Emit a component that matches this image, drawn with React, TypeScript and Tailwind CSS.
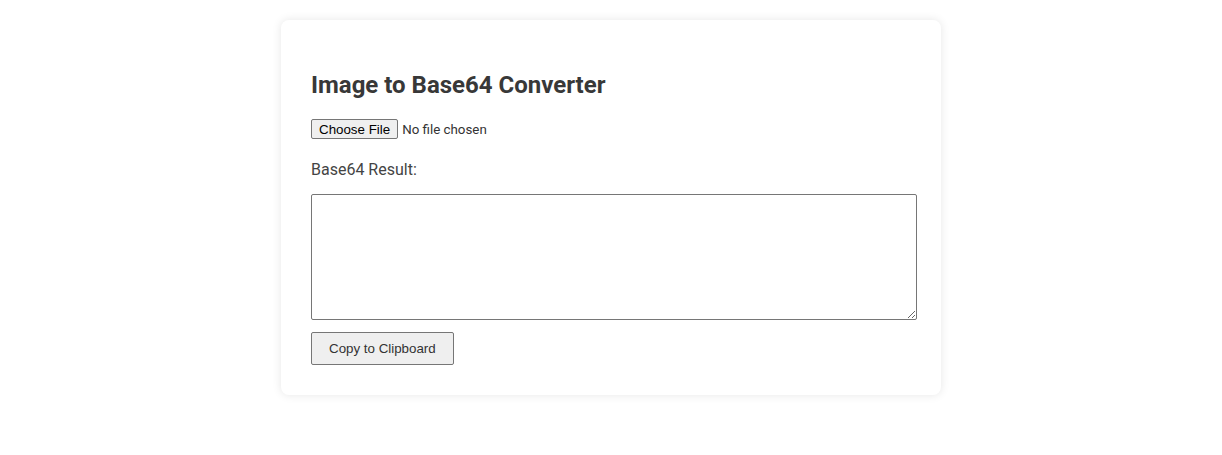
import React from "react";

export default function App() {
  return (
    <div className="min-h-[455px] bg-white pt-[20px] font-['Roboto',sans-serif] text-[#333]">
      <div className="mx-auto w-[660px] rounded-[8px] bg-white px-[30px] pt-[30px] pb-[30px] shadow-[0_0_10px_rgba(0,0,0,0.1)]">
        <h2 className="mt-[21px] mb-[20px] text-[24px] leading-[28px] font-bold text-[#383838]">
          Image to Base64 Converter
        </h2>
        <input
          type="file"
          accept="image/*"
          className="block h-[21px] text-[13.33px] text-[#333] file:mr-[4px] file:mt-0 file:h-[20px] file:rounded-[2px] file:border file:border-solid file:border-[#767676] file:bg-[#efefef] file:px-[7px] file:font-['Liberation_Sans',Arial,sans-serif] file:text-[13.33px] file:text-black"
        />
        <p className="mt-[20px] text-[16px] leading-[19px] text-[#444]">Base64 Result:</p>
        <textarea
          readOnly
          className="mt-[15px] box-content block h-[120px] w-[600px] resize rounded-[2px] border border-solid border-[#767676] p-[2px] text-[13.33px]"
        />
        <button className="mt-[12px] h-[33px] rounded-[2px] border border-solid border-[#767676] bg-[#efefef] px-[17px] font-['Liberation_Sans',Arial,sans-serif] text-[13.33px] text-[#333]">
          Copy to Clipboard
        </button>
      </div>
    </div>
  );
}
